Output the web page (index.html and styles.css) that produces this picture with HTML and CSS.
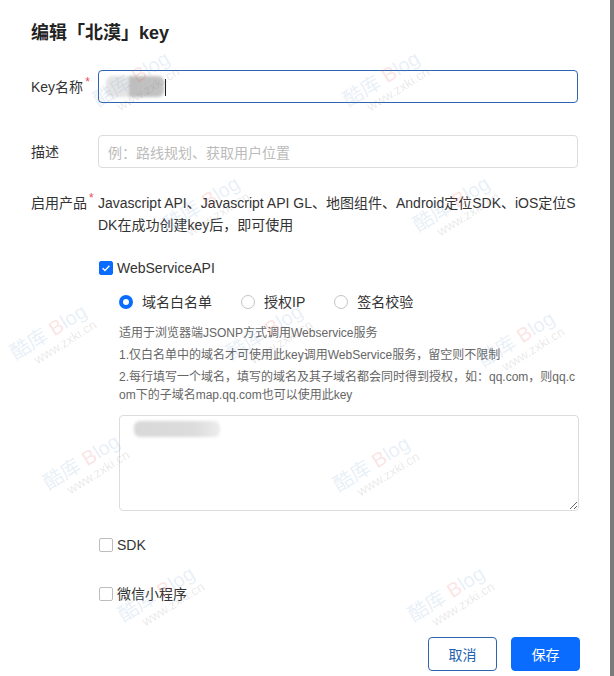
FILE: index.html
```html
<!DOCTYPE html>
<html lang="zh-CN">
<head>
  <meta charset="UTF-8">
  <meta name="viewport" content="width=device-width, initial-scale=1.0">
  <title>编辑key</title>
  <link rel="stylesheet" href="styles.css">
</head>
<body>

<div class="dialog">
  <h2 class="title">编辑「北漠」key</h2>

  <div class="row row-key">
    <label class="label">Key名称<span class="req">*</span></label>
    <div class="input focused">
      <span class="blur blur-key"></span>
      <span class="caret"></span>
    </div>
  </div>

  <div class="row row-desc">
    <label class="label">描述</label>
    <div class="input">
      <span class="placeholder">例：路线规划、获取用户位置</span>
    </div>
  </div>

  <div class="row row-prod">
    <label class="label">启用产品<span class="req">*</span></label>
    <div class="field">
      <p class="intro">Javascript API、Javascript API GL、地图组件、Android定位SDK、iOS定位SDK在成功创建key后，即可使用</p>

      <div class="check check-ws">
        <span class="box checked">
          <svg viewBox="0 0 14 14" width="14" height="14"><path d="M3.6 7.2 L6 9.5 L10.4 4.8" fill="none" stroke="#fff" stroke-width="1.4"/></svg>
        </span>
        <span>WebServiceAPI</span>
      </div>

      <div class="sub">
        <div class="radios">
          <span class="radio"><span class="dot on"></span>域名白名单</span>
          <span class="radio"><span class="dot"></span>授权IP</span>
          <span class="radio"><span class="dot"></span>签名校验</span>
        </div>

        <div class="help">
          <p>适用于浏览器端JSONP方式调用Webservice服务</p>
          <p>1.仅白名单中的域名才可使用此key调用WebService服务，留空则不限制</p>
          <p>2.每行填写一个域名，填写的域名及其子域名都会同时得到授权，如：qq.com，则qq.com下的子域名map.qq.com也可以使用此key</p>
        </div>

        <div class="area-wrap">
          <textarea class="area"></textarea>
          <span class="blur blur-area"></span>
        </div>
      </div>

      <div class="check check-sdk">
        <span class="box"></span>
        <span>SDK</span>
      </div>

      <div class="check check-wx">
        <span class="box"></span>
        <span>微信小程序</span>
      </div>
    </div>
  </div>

  <div class="actions">
    <button class="btn btn-cancel">取消</button>
    <button class="btn btn-save">保存</button>
  </div>
</div>

<div class="edge"></div>

<!-- watermark layer -->
<div class="marks">
  <div class="mark" style="left:135px;top:85px"><b>酷库 <i>B</i>log</b><em>www.zxki.cn</em></div>
  <div class="mark" style="left:385px;top:85px"><b>酷库 <i>B</i>log</b><em>www.zxki.cn</em></div>
  <div class="mark" style="left:205px;top:210px"><b>酷库 <i>B</i>log</b><em>www.zxki.cn</em></div>
  <div class="mark" style="left:455px;top:210px"><b>酷库 <i>B</i>log</b><em>www.zxki.cn</em></div>
  <div class="mark" style="left:52px;top:338px"><b>酷库 <i>B</i>log</b><em>www.zxki.cn</em></div>
  <div class="mark" style="left:268px;top:338px"><b>酷库 <i>B</i>log</b><em>www.zxki.cn</em></div>
  <div class="mark" style="left:520px;top:345px"><b>酷库 <i>B</i>log</b><em>www.zxki.cn</em></div>
  <div class="mark" style="left:85px;top:468px"><b>酷库 <i>B</i>log</b><em>www.zxki.cn</em></div>
  <div class="mark" style="left:375px;top:470px"><b>酷库 <i>B</i>log</b><em>www.zxki.cn</em></div>
  <div class="mark" style="left:160px;top:600px"><b>酷库 <i>B</i>log</b><em>www.zxki.cn</em></div>
  <div class="mark" style="left:450px;top:600px"><b>酷库 <i>B</i>log</b><em>www.zxki.cn</em></div>
</div>

</body>
</html>
```

FILE: styles.css
```css
body {
  font-family: "Liberation Sans", "Noto Sans CJK SC", sans-serif;
  margin: 0;
  padding: 0;
  background-color: #fff;
  color: #333;
  display: flex;
  position: relative;
  height: 676px;
  overflow: hidden;
}

.dialog {
  width: 610px;
  box-sizing: border-box;
  padding: 21px 32px 0 31px;
}

.edge {
  width: 4px;
  background-color: #7b7b7b;
}

.title {
  margin: 0;
  font-size: 18px;
  line-height: 24px;
  font-weight: bold;
  color: #222;
}

.row {
  display: flex;
  align-items: center;
}

.label {
  width: 67px;
  flex-shrink: 0;
  font-size: 14px;
  line-height: 22px;
  color: #333;
}

.req {
  color: #e34d59;
  font-size: 12px;
  line-height: 12px;
  vertical-align: top;
  margin-left: 2px;
}

.input {
  width: 480px;
  height: 33px;
  box-sizing: border-box;
  border: 1px solid #dcdcdc;
  border-radius: 4px;
  position: relative;
  display: flex;
  align-items: center;
  padding-left: 9px;
}

.input.focused {
  border-color: #2f65b0;
}

.placeholder {
  font-size: 14px;
  color: #bbb;
}

.caret {
  position: absolute;
  left: 66px;
  top: 8px;
  width: 1px;
  height: 17px;
  background-color: #222;
}

.blur {
  position: absolute;
  background-color: #c8c8c8;
  filter: blur(1.5px);
  border-radius: 6px;
}

.blur-key {
  left: 7px;
  top: 5px;
  width: 58px;
  height: 21px;
  background: linear-gradient(to right, #e4e4e4 0, #e4e4e4 40%, #bdbdbd 40%, #c4c4c4 100%);
}

.blur-area {
  left: 15px;
  top: 6px;
  width: 86px;
  height: 16px;
  background: linear-gradient(to right, #d8d8d8 0, #dcdcdc 70%, #ececec 100%);
}

.row-key {
  margin-top: 25px;
}

.row-desc {
  margin-top: 32px;
}

.row-prod {
  margin-top: 24px;
  align-items: flex-start;
}

.field {
  width: 480px;
}

.intro {
  margin: 0;
  font-size: 14px;
  line-height: 22px;
  color: #333;
  word-break: break-all;
}

.check {
  display: flex;
  align-items: center;
  font-size: 14px;
  line-height: 22px;
  color: #333;
  padding-left: 1px;
}

.box {
  width: 14px;
  height: 14px;
  box-sizing: border-box;
  border: 1px solid #bdbdbd;
  border-radius: 2px;
  margin-right: 4px;
  background-color: #fff;
  display: flex;
}

.box.checked {
  background-color: #0a6cff;
  border-color: #0a6cff;
}

.box.checked svg {
  margin: -1px;
}

.check-ws {
  margin-top: 21px;
}

.check-sdk {
  margin-top: 23px;
}

.check-wx {
  margin-top: 27px;
}

.sub {
  padding-left: 21px;
}

.radios {
  display: flex;
  margin-top: 12px;
  font-size: 14px;
  line-height: 22px;
  color: #333;
}

.radio {
  display: flex;
  align-items: center;
  margin-right: 29px;
}

.dot {
  width: 14px;
  height: 14px;
  box-sizing: border-box;
  border: 1px solid #c4c4c4;
  border-radius: 50%;
  margin-right: 9px;
}

.dot.on {
  border: 4px solid #0a6cff;
}

.help {
  margin-top: 11px;
  font-size: 12px;
  line-height: 18px;
  color: #666;
  word-break: break-all;
}

.help p {
  margin: 0 0 4px;
}

.area-wrap {
  position: relative;
  margin-top: 11px;
}

.area {
  display: block;
  width: 460px;
  height: 96px;
  box-sizing: border-box;
  border: 1px solid #dcdcdc;
  border-radius: 4px;
  margin: 0;
  font-family: inherit;
}

.actions {
  display: flex;
  justify-content: flex-end;
  gap: 14px;
  margin-top: 32px;
  margin-right: -2px;
}

.btn {
  width: 69px;
  height: 34px;
  border-radius: 4px;
  font-family: "Liberation Sans", "Noto Sans CJK SC", sans-serif;
  font-size: 14px;
  cursor: pointer;
}

.btn-cancel {
  background-color: #fff;
  border: 1px solid #2f65b0;
  color: #2360b0;
}

.btn-save {
  background-color: #0a6cff;
  border: 1px solid #0a6cff;
  color: #fff;
}

/* watermarks */
.marks {
  position: absolute;
  left: 0;
  top: 0;
  width: 614px;
  height: 676px;
  pointer-events: none;
}

.mark {
  position: absolute;
  transform: translate(-50%, -50%) rotate(-32deg);
  text-align: center;
  white-space: nowrap;
  line-height: 1.1;
}

.mark b {
  display: block;
  font-weight: normal;
  font-size: 20px;
  color: rgba(120, 160, 210, 0.18);
}

.mark b i {
  font-style: normal;
  color: rgba(230, 90, 90, 0.18);
}

.mark em {
  display: block;
  font-style: normal;
  font-size: 13px;
  color: rgba(110, 110, 110, 0.16);
  margin-left: 18px;
}
```
